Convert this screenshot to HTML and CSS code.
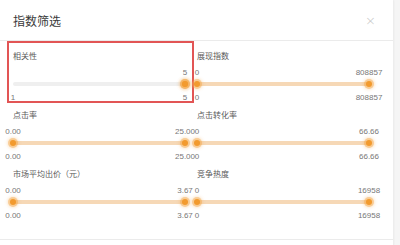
FILE: index.html
```html
<!DOCTYPE html>
<html lang="zh-CN">
<head>
    <meta charset="UTF-8">
    <meta name="viewport" content="width=device-width, initial-scale=1.0">
    <title>指数筛选</title>
    <link rel="stylesheet" href="styles.css">
</head>
<body>
    <div class="modal">
        <div class="modal-header">
            <span class="modal-title">指数筛选</span>
            <span class="modal-close">×</span>
        </div>

        <div class="modal-body">
            <div class="filter-cell selected">
                <div class="filter-label">相关性</div>
                <div class="value-row">
                    <span class="value" style="left: 100%">5</span>
                </div>
                <div class="slider">
                    <div class="slider-rail"></div>
                    <span class="slider-handle" style="left: 100%"></span>
                    <span class="slider-handle" style="left: 100%"></span>
                </div>
                <div class="value-row bottom">
                    <span class="value" style="left: 0%">1</span>
                    <span class="value" style="left: 100%">5</span>
                </div>
            </div>

            <div class="filter-cell">
                <div class="filter-label">展现指数</div>
                <div class="value-row">
                    <span class="value" style="left: 0%">0</span>
                    <span class="value" style="left: 100%">808857</span>
                </div>
                <div class="slider">
                    <div class="slider-rail"></div>
                    <div class="slider-track" style="left: 0%; width: 100%"></div>
                    <span class="slider-handle" style="left: 0%"></span>
                    <span class="slider-handle" style="left: 100%"></span>
                </div>
                <div class="value-row bottom">
                    <span class="value" style="left: 0%">0</span>
                    <span class="value" style="left: 100%">808857</span>
                </div>
            </div>

            <div class="filter-cell">
                <div class="filter-label">点击率</div>
                <div class="value-row">
                    <span class="value" style="left: 0%">0.00</span>
                    <span class="value" style="left: 100%">25.00</span>
                </div>
                <div class="slider">
                    <div class="slider-rail"></div>
                    <div class="slider-track" style="left: 0%; width: 100%"></div>
                    <span class="slider-handle" style="left: 0%"></span>
                    <span class="slider-handle" style="left: 100%"></span>
                </div>
                <div class="value-row bottom">
                    <span class="value" style="left: 0%">0.00</span>
                    <span class="value" style="left: 100%">25.00</span>
                </div>
            </div>

            <div class="filter-cell">
                <div class="filter-label">点击转化率</div>
                <div class="value-row">
                    <span class="value" style="left: 0%">0</span>
                    <span class="value" style="left: 100%">66.66</span>
                </div>
                <div class="slider">
                    <div class="slider-rail"></div>
                    <div class="slider-track" style="left: 0%; width: 100%"></div>
                    <span class="slider-handle" style="left: 0%"></span>
                    <span class="slider-handle" style="left: 100%"></span>
                </div>
                <div class="value-row bottom">
                    <span class="value" style="left: 0%">0</span>
                    <span class="value" style="left: 100%">66.66</span>
                </div>
            </div>

            <div class="filter-cell">
                <div class="filter-label">市场平均出价（元）</div>
                <div class="value-row">
                    <span class="value" style="left: 0%">0.00</span>
                    <span class="value" style="left: 100%">3.67</span>
                </div>
                <div class="slider">
                    <div class="slider-rail"></div>
                    <div class="slider-track" style="left: 0%; width: 100%"></div>
                    <span class="slider-handle" style="left: 0%"></span>
                    <span class="slider-handle" style="left: 100%"></span>
                </div>
                <div class="value-row bottom">
                    <span class="value" style="left: 0%">0.00</span>
                    <span class="value" style="left: 100%">3.67</span>
                </div>
            </div>

            <div class="filter-cell">
                <div class="filter-label">竞争热度</div>
                <div class="value-row">
                    <span class="value" style="left: 0%">0</span>
                    <span class="value" style="left: 100%">16958</span>
                </div>
                <div class="slider">
                    <div class="slider-rail"></div>
                    <div class="slider-track" style="left: 0%; width: 100%"></div>
                    <span class="slider-handle" style="left: 0%"></span>
                    <span class="slider-handle" style="left: 100%"></span>
                </div>
                <div class="value-row bottom">
                    <span class="value" style="left: 0%">0</span>
                    <span class="value" style="left: 100%">16958</span>
                </div>
            </div>
        </div>

        <div class="modal-footer"></div>
    </div>
</body>
</html>
```

FILE: styles.css
```css
body {
    margin: 0;
    font-family: "Liberation Sans", "Noto Sans CJK SC", sans-serif;
    background-color: #f5f5f5;
    overflow: hidden;
}
.modal {
    width: 393px;
    background-color: white;
    box-shadow: 1px 0 2px rgba(0, 0, 0, 0.05);
}
.modal-header {
    display: flex;
    justify-content: space-between;
    align-items: center;
    height: 40px;
    padding: 0 17px 0 13px;
    border-bottom: 1px solid #ebebeb;
}
.modal-title {
    font-size: 12px;
    color: #3a3a3a;
    padding-top: 1px;
}
.modal-close {
    font-size: 13px;
    color: #c4c4c4;
    font-family: "DejaVu Sans", sans-serif;
    font-weight: 200;
}
.modal-body {
    display: grid;
    grid-template-columns: 187px 187px;
    grid-auto-rows: 59px;
    padding: 1px 0 20px 7px;
    border-bottom: 1px solid #ebebeb;
}
.filter-cell {
    position: relative;
    padding: 10px 9px 0 6px;
}
.filter-cell:nth-child(even) {
    padding: 10px 12px 0 3px;
}
.filter-cell.selected::after {
    content: "";
    position: absolute;
    top: -1px;
    left: 0;
    right: 0;
    bottom: -2px;
    border: 2px solid #e25555;
}
.filter-label {
    font-size: 8px;
    line-height: 10px;
    color: #5a5a5a;
    white-space: nowrap;
}
.value-row {
    position: relative;
    height: 10px;
    margin-top: 6px;
}
.value-row.bottom {
    margin-top: 3px;
}
.value {
    position: absolute;
    top: 0;
    transform: translateX(-50%);
    font-size: 8px;
    line-height: 10px;
    color: #777;
    white-space: nowrap;
}
.slider {
    position: relative;
    height: 12px;
}
.slider-rail {
    position: absolute;
    left: 0;
    right: 0;
    top: 4px;
    height: 4px;
    border-radius: 2px;
    background-color: #efefef;
}
.slider-track {
    position: absolute;
    top: 4px;
    height: 4px;
    border-radius: 2px;
    background-color: #f6d8b6;
}
.slider-handle {
    position: absolute;
    top: 6px;
    width: 6px;
    height: 6px;
    margin: -3px 0 0 -3px;
    border-radius: 50%;
    background-color: #f29a2e;
    box-shadow: 0 0 0 2px rgba(245, 166, 70, 0.45), 0 0 3px 3px rgba(245, 166, 70, 0.25);
}
.modal-footer {
    height: 6px;
}
```
